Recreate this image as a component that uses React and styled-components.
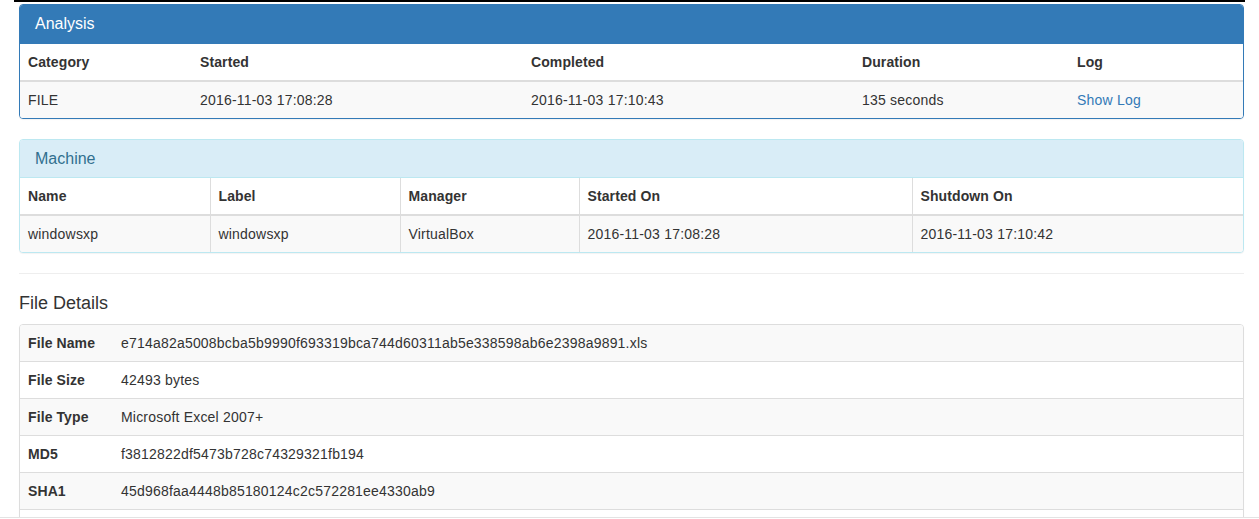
import React from 'react';
import styled, { createGlobalStyle } from 'styled-components';

const GlobalStyle = createGlobalStyle`
  html, body {
    margin: 0;
    padding: 0;
    background: #fff;
    font-family: "Liberation Sans", Arial, Helvetica, sans-serif;
    font-size: 14px;
    line-height: 1.42857;
    color: #333;
    overflow: hidden;
  }
  * { box-sizing: border-box; }
`;

const Page = styled.div`
  padding: 0 15px 0 19px;
  width: 1259px;
`;

const TopRule = styled.div`
  height: 2px;
  margin: 0 -5px 2px;
  width: 1231px;
  background: #000;
`;

const Panel = styled.div`
  width: 1225px;
  margin-bottom: 20px;
  background: #fff;
  border: 1px solid ${(p) => p.$border};
  border-radius: 4px;
  box-shadow: 0 1px 1px rgba(0, 0, 0, 0.05);
  overflow: hidden;
`;

const PanelHeading = styled.div`
  padding: 10px 15px;
  background: ${(p) => p.$bg};
  color: ${(p) => p.$color};
  border-bottom: 1px solid ${(p) => p.$border};
`;

const PanelTitle = styled.h3`
  margin: 0;
  font-size: 16px;
  font-weight: 400;
  line-height: 1.1;
`;

const Table = styled.table`
  width: 100%;
  border-collapse: collapse;
  border-spacing: 0;
  table-layout: fixed;
`;

const Th = styled.th`
  text-align: left;
  font-weight: 700;
  padding: 8px;
  line-height: 20px;
  letter-spacing: 0.1px;
  border-bottom: 2px solid #ddd;
  border-left: ${(p) => (p.$bordered ? '1px solid #ddd' : '0')};
  &:first-child { border-left: 0; }
`;

const Row = styled.tr`
  background: ${(p) => (p.$odd ? '#f9f9f9' : '#fff')};
`;

const Td = styled.td`
  padding: 8px;
  line-height: 20px;
  letter-spacing: 0.2px;
  vertical-align: top;
  white-space: nowrap;
  border-top: 1px solid #ddd;
  border-left: ${(p) => (p.$bordered ? '1px solid #ddd' : '0')};
  &:first-child { border-left: 0; }
  tbody tr:first-child > & { border-top: ${(p) => (p.$afterHead ? '2px solid #ddd' : '0')}; }
`;

const KeyCell = styled.th`
  text-align: left;
  font-weight: 700;
  padding: 8px;
  line-height: 20px;
  letter-spacing: 0.1px;
  vertical-align: top;
  white-space: nowrap;
  border-top: 1px solid #ddd;
  tbody tr:first-child > & { border-top: 0; }
`;

const Link = styled.a`
  color: #337ab7;
  text-decoration: none;
`;

const Divider = styled.hr`
  margin: 20px 0;
  width: 1225px;
  border: 0;
  border-top: 1px solid #eee;
`;

const SectionTitle = styled.h4`
  margin: 0 0 10px;
  font-size: 18px;
  font-weight: 400;
  line-height: 1.1;
`;

const Footer = styled.div`
  position: fixed;
  left: 0;
  right: 0;
  bottom: 0;
  height: 2px;
  background: #fff;
  border-top: 1px solid #e3e3e3;
`;

const analysisCols = [172, 331, 331, 215, 174];
const machineCols = [190, 190, 179, 333, 331];

// the last row sits under the bottom edge, only its top border shows
const fileDetails = [
  ['File Name', 'e714a82a5008bcba5b9990f693319bca744d60311ab5e338598ab6e2398a9891.xls'],
  ['File Size', '42493 bytes'],
  ['File Type', 'Microsoft Excel 2007+'],
  ['MD5', 'f3812822df5473b728c74329321fb194'],
  ['SHA1', '45d968faa4448b85180124c2c572281ee4330ab9'],
  ['', ''],
];

export default function App() {
  return (
    <>
      <GlobalStyle />
      <Page>
        <TopRule />
        <Panel $border="#337ab7">
          <PanelHeading $bg="#337ab7" $color="#fff" $border="#337ab7">
            <PanelTitle>Analysis</PanelTitle>
          </PanelHeading>
          <Table>
            <colgroup>
              {analysisCols.map((w, i) => <col key={i} style={{ width: w }} />)}
            </colgroup>
            <thead>
              <tr>
                <Th>Category</Th>
                <Th>Started</Th>
                <Th>Completed</Th>
                <Th>Duration</Th>
                <Th>Log</Th>
              </tr>
            </thead>
            <tbody>
              <Row $odd>
                <Td $afterHead>FILE</Td>
                <Td $afterHead>2016-11-03 17:08:28</Td>
                <Td $afterHead>2016-11-03 17:10:43</Td>
                <Td $afterHead>135 seconds</Td>
                <Td $afterHead><Link href="#">Show Log</Link></Td>
              </Row>
            </tbody>
          </Table>
        </Panel>

        <Panel $border="#bce8f1">
          <PanelHeading $bg="#d9edf7" $color="#31708f" $border="#bce8f1">
            <PanelTitle>Machine</PanelTitle>
          </PanelHeading>
          <Table>
            <colgroup>
              {machineCols.map((w, i) => <col key={i} style={{ width: w }} />)}
            </colgroup>
            <thead>
              <tr>
                <Th $bordered>Name</Th>
                <Th $bordered>Label</Th>
                <Th $bordered>Manager</Th>
                <Th $bordered>Started On</Th>
                <Th $bordered>Shutdown On</Th>
              </tr>
            </thead>
            <tbody>
              <Row $odd>
                <Td $bordered $afterHead>windowsxp</Td>
                <Td $bordered $afterHead>windowsxp</Td>
                <Td $bordered $afterHead>VirtualBox</Td>
                <Td $bordered $afterHead>2016-11-03 17:08:28</Td>
                <Td $bordered $afterHead>2016-11-03 17:10:42</Td>
              </Row>
            </tbody>
          </Table>
        </Panel>

        <Divider />
        <SectionTitle>File Details</SectionTitle>
        <Panel $border="#ddd">
          <Table>
            <colgroup>
              <col style={{ width: 93 }} />
              <col />
            </colgroup>
            <tbody>
              {fileDetails.map(([k, v], i) => (
                <Row key={i} $odd={i % 2 === 0}>
                  <KeyCell>{k || '\u00a0'}</KeyCell>
                  <Td>{v || '\u00a0'}</Td>
                </Row>
              ))}
            </tbody>
          </Table>
        </Panel>
      </Page>
      <Footer />
    </>
  );
}
